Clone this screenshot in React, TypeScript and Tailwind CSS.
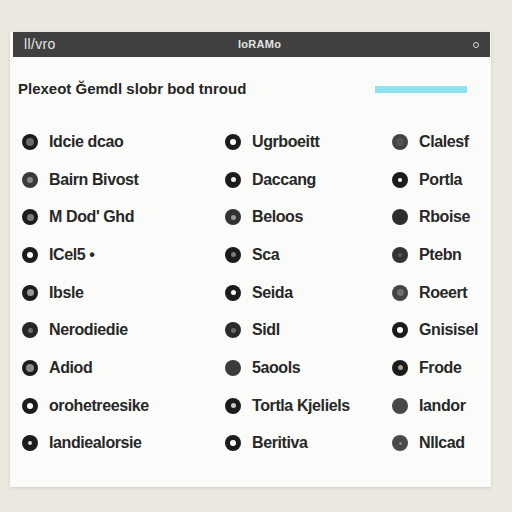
type Dot = { outer: string; inner: string; size: number };

const ring = (inner = "#ffffff", size = 6): Dot => ({ outer: "#1c1c1c", inner, size });
const solid = (outer: string, inner = outer, size = 6): Dot => ({ outer, inner, size });

// rows of [label, dot] for the three columns
const columns: [string, Dot][][] = [
  [
    ["Idcie dcao", ring("#6b6b6b", 8)],
    ["Bairn Bivost", solid("#3a3a3a", "#8a8a8a", 6)],
    ["M Dod' Ghd", ring("#7a7a7a", 7)],
    ["ICel5 •", ring("#ffffff", 6)],
    ["Ibsle", ring("#9a9a9a", 7)],
    ["Nerodiedie", solid("#262626", "#6f6f6f", 5)],
    ["Adiod", ring("#8c8c8c", 8)],
    ["orohetreesike", ring("#ffffff", 6)],
    ["Iandiealorsie", ring("#dcdcdc", 4)],
  ],
  [
    ["Ugrboeitt", ring("#ffffff", 6)],
    ["Daccang", ring("#f2f2f2", 5)],
    ["Beloos", solid("#333333", "#8fa08f", 5)],
    ["Sca", ring("#7a7a7a", 5)],
    ["Seida", ring("#ffffff", 5)],
    ["Sidl", solid("#2a2a2a", "#6a6a6a", 5)],
    ["5aools", solid("#3b3b3b")],
    ["Tortla Kjeliels", ring("#c8c8c8", 5)],
    ["Beritiva", ring("#ffffff", 6)],
  ],
  [
    ["Clalesf", solid("#444444", "#555555", 8)],
    ["Portla", ring("#ffffff", 4)],
    ["Rboise", solid("#2e2e2e")],
    ["Ptebn", solid("#333333", "#5a5a5a", 4)],
    ["Roeert", solid("#444444", "#707070", 7)],
    ["Gnisisel", ring("#ffffff", 6)],
    ["Frode", ring("#b39a7c", 5)],
    ["Iandor", solid("#474747")],
    ["Nllcad", solid("#4a4a4a", "#8a8a8a", 3)],
  ],
];

function Marker({ dot }: { dot: Dot }) {
  return (
    <span
      className="flex h-4 w-4 shrink-0 items-center justify-center rounded-full"
      style={{ backgroundColor: dot.outer }}
    >
      <span className="rounded-full" style={{ width: dot.size, height: dot.size, backgroundColor: dot.inner }} />
    </span>
  );
}

export default function App() {
  const rows = columns[0].map((_, i) => i);

  return (
    <main
      className="min-h-screen w-[512px] h-[512px] bg-[#ebe8e0] pt-[32px] pl-[10px]"
      style={{ fontFamily: '"Liberation Sans", Arial, sans-serif' }}
    >
      <div className="w-[481px] h-[455px] bg-[#fbfbfa] shadow-[0_1px_3px_rgba(0,0,0,0.12)]">
        {/* window bar */}
        <div className="ml-[3px] mr-[1px] h-[25px] bg-[#404040] flex items-center px-[11px]">
          <span className="w-[214px] text-[14px] text-[#e4e4e4] tracking-wide">ll/vro</span>
          <span className="text-[11px] text-[#e4e4e4] font-semibold tracking-wide">loRAMo</span>
          <span className="ml-auto h-[6px] w-[6px] rounded-full border border-[#d8d8d8]" />
        </div>

        <div className="flex items-center justify-between pl-[8px] pr-[24px] mt-[24px] h-[16px]">
          <h1 className="text-[15px] font-bold text-[#262626]">Plexeot Ğemdl slobr bod tnroud</h1>
          <div className="h-[7px] w-[92px] bg-[#8ee3f1]" />
        </div>

        <div className="mt-[26px] pl-[12px] grid grid-cols-[203px_167px_1fr]">
          {rows.map((i) =>
            columns.map((col, c) => (
              <div key={`${i}-${c}`} className="h-[37.7px] flex items-center gap-[11px]">
                <Marker dot={col[i][1]} />
                <span className="text-[16px] font-semibold text-[#282828] tracking-tight">{col[i][0]}</span>
              </div>
            ))
          )}
        </div>
      </div>
    </main>
  );
}
